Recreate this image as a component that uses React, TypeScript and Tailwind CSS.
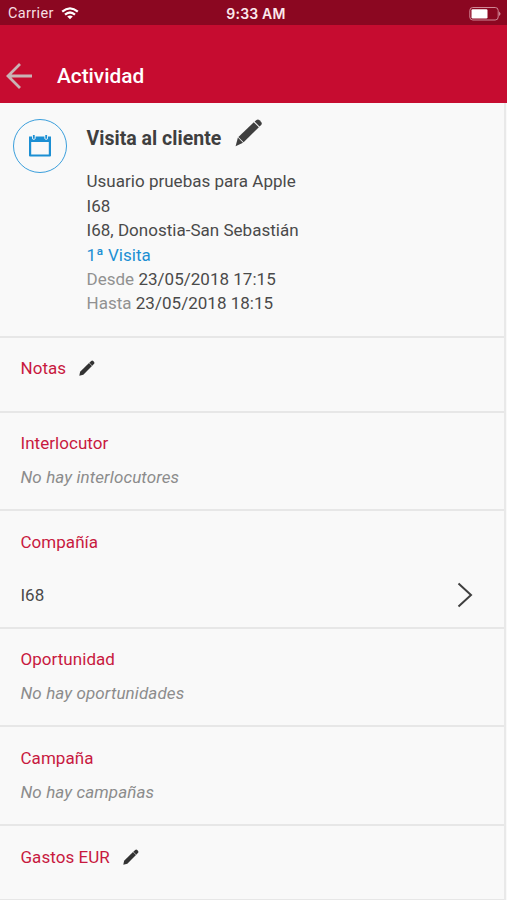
import type { ReactNode } from "react";

const emptyClass = "mt-[10px] text-[17px] leading-6 tracking-[0.100px] italic text-[#8c8c8c]";

function BigPencil() {
  return (
    <svg viewBox="0 0 28 28" className="h-7 w-7 fill-[#3f3f3f]">
      <path d="M19.600 2.600 21.500 1q1.500-1.100 3 .2l1.700 1.800q1.200 1.500 0 2.900L24.500 7.600Z" />
      <path d="M18.800 3.300 23.900 8.300 8.600 23.200 3.400 17.900Z" />
      <path d="M2.900 18.500 8 23.700.600 27.300Z" />
    </svg>
  );
}

function SmallPencil() {
  return (
    <svg viewBox="0 0 16 16" className="h-4 w-4 fill-[#333]">
      <path d="M.3 15.700 1.100 11.700 10 3 13 6 4.300 14.800Z" />
      <path d="M10.300 2.700 12.200 1q1-.9 2 0l.9 1q.8.9 0 1.800L13.300 5.700Z" />
    </svg>
  );
}

function Section({ title, edit, className, children }: {
  title: string;
  edit?: boolean;
  className: string;
  children?: ReactNode;
}) {
  return (
    <section className={`border-b-2 border-[#e7e7e7] pl-[20.500px] ${className}`}>
      <div className="flex items-center gap-[13px]">
        <h2 className="text-[17px] leading-6 tracking-[0.040px] text-[#c8193f]">{title}</h2>
        {edit && <SmallPencil />}
      </div>
      {children}
    </section>
  );
}

function StatusBar() {
  return (
    <div className="grid h-[25px] grid-cols-3 items-center bg-[#8b0721] pt-[2px] text-white">
      <div className="flex items-center gap-[7px] pl-[8px]">
        <span className="font-[Roboto] text-[14.500px] leading-5 tracking-[0.350px] text-[#f5dfe3]">Carrier</span>
        <svg viewBox="0 0 18 13" className="h-[13px] w-[18px] fill-none stroke-white stroke-[2.2]">
          <path d="M1.200 4.700Q9-2 16.800 4.700M4 7.700Q9 3.300 14 7.700" />
          <path d="M6.200 9.500Q9 7.300 11.800 9.500L9 12.300Z" className="fill-white stroke-none" />
        </svg>
      </div>
      <span className="pl-[5px] text-center font-[Inter] text-[14px] font-semibold leading-5 tracking-[0.200px] text-[#fbe9ec]">9:33 AM</span>
      <svg viewBox="0 0 32 14" className="mr-[6px] h-[14px] w-8 justify-self-end">
        <rect x=".8" y=".5" width="28.400" height="12.500" rx="3" className="fill-none stroke-[#d08796]" />
        <rect x="2.500" y="2.200" width="16" height="9.200" rx="1.200" fill="white" />
        <path d="M30 4.500q3 2.300 0 4.600Z" className="fill-[#d08796]" />
      </svg>
    </div>
  );
}

export default function App() {
  return (
    <div className="flex h-[900px] w-[507px] flex-col overflow-hidden bg-[#f9f9f9] font-[Roboto,sans-serif]">
      <StatusBar />
      <header className="flex h-[78px] items-center bg-[#c60c30] pl-[6px] pt-[24px]">
        <svg viewBox="0 0 27 26" className="h-[26px] w-[27px] fill-none stroke-[#c9b3b5] stroke-[2.800]">
          <path d="M14 1 2 13 14 25M2 13H26" />
        </svg>
        <h1 className="ml-6 text-[20.800px] font-medium leading-6 text-white">Actividad</h1>
      </header>

      <main className="mr-[1px] h-[797px] border-r-2 border-[#e9e9e9]">
        <section className="flex h-[235px] border-b-2 border-[#e7e7e7] pl-[13px] pt-4">
          <div className="flex h-[54px] w-[54px] items-center justify-center rounded-full border-[1.500px] border-[#3b9fdc] pb-px">
            <svg viewBox="0 0 22 22" className="h-[22px] w-[22px] fill-[#1c8fd3]">
              <path fillRule="evenodd" d="M0 1.500H3V3.500Q4.800 6.200 6.600 3.500V1.500H15.400V3.500Q17.200 6.200 19 3.500V1.500H22V20.500Q22 21.500 21 21.500H1Q0 21.500 0 20.500ZM2.200 7V19.500H19.800V7Z" />
              <path d="M3.900 0H5.700V3.800H3.900ZM16.300 0H18.100V3.800H16.300Z" />
            </svg>
          </div>
          <div className="ml-[19.500px] text-[17px] leading-[24.400px] tracking-[0.020px] text-[#4a4a4a]">
            <div className="flex h-[50.400px] items-start">
              <h2 className="mt-[8px] text-[19.500px] font-bold leading-6 text-[#3f3f3f]">Visita al cliente</h2>
              <div className="ml-[14px]"><BigPencil /></div>
            </div>
            <p>Usuario pruebas para Apple</p>
            <p>I68</p>
            <p>I68, Donostia-San Sebastián</p>
            <p className="text-[#1c8fd3]">1ª Visita</p>
            <p><span className="text-[#919191]">Desde</span> 23/05/2018 17:15</p>
            <p><span className="text-[#919191]">Hasta</span> 23/05/2018 18:15</p>
          </div>
        </section>

        <Section title="Notas" edit className="h-[75px] pt-[18px]" />
        <Section title="Interlocutor" className="h-[98px] pt-[18px]">
          <p className={emptyClass}>No hay interlocutores</p>
        </Section>
        <Section title="Compañía" className="h-[118px] pt-[19px]">
          <div className="mt-7 flex items-center justify-between pr-[31px]">
            <span className="text-[17px] leading-6 text-[#4a4a4a]">I68</span>
            <svg viewBox="0 0 16 26" className="h-[26px] w-4 fill-none stroke-[#3f3f3f] stroke-2">
              <path d="M1.500 1.500 14 13 1.500 24.500" />
            </svg>
          </div>
        </Section>
        <Section title="Oportunidad" className="h-[98px] pt-[18px]">
          <p className={emptyClass}>No hay oportunidades</p>
        </Section>
        <Section title="Campaña" className="h-[99px] pt-[19px]">
          <p className={emptyClass}>No hay campañas</p>
        </Section>
        <Section title="Gastos EUR" edit className="h-[75px] pt-[19px]" />
      </main>
    </div>
  );
}
